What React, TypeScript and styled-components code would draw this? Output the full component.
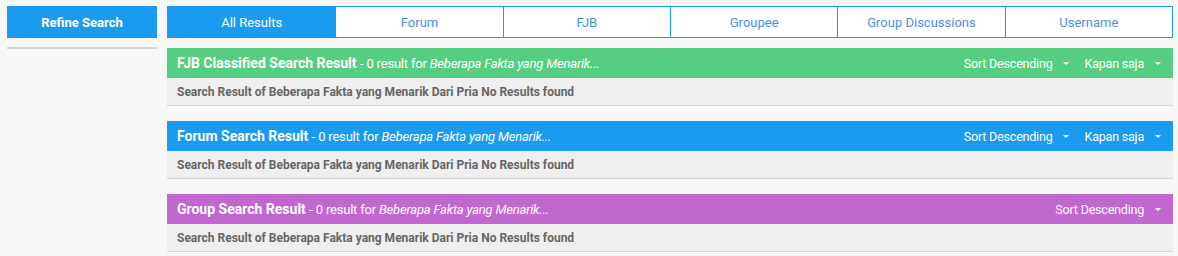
import React from "react";
import styled, { createGlobalStyle } from "styled-components";

const Global = createGlobalStyle`
  html, body { margin: 0; padding: 0; background: #f7f7f7; }
  body { font-family: Roboto, "Noto Sans", Arial, sans-serif; }
  * { box-sizing: border-box; }
`;

const Page = styled.div`
  display: flex;
  align-items: flex-start;
  gap: 10px;
  padding: 6px 5px 0 7px;
  width: 1178px;
  height: 256px;
  overflow: hidden;
`;

const Sidebar = styled.aside`
  width: 150px;
  flex: none;
  display: flex;
  flex-direction: column;
  gap: 9px;
`;

const RefineButton = styled.div`
  flex: none;
  height: 32px;
  background: #1a9bef;
  color: #fff;
  font-weight: 700;
  font-size: 13px;
  display: flex;
  align-items: center;
  justify-content: center;
`;

const Divider = styled.div`
  flex: none;
  height: 2px;
  background: #d6d6d6;
`;

const Main = styled.main`
  width: 1006px;
  flex: none;
  display: flex;
  flex-direction: column;
`;

const Tabs = styled.nav`
  flex: none;
  display: grid;
  grid-template-columns: repeat(6, 1fr);
  height: 32px;
  border: 1px solid #1a9bef;
  background: #fff;
  margin-bottom: 10px;
`;

const Tab = styled.div<{ $active?: boolean }>`
  display: flex;
  align-items: center;
  justify-content: center;
  font-size: 13px;
  color: ${(p) => (p.$active ? "#fff" : "#4a90e2")};
  background: ${(p) => (p.$active ? "#1a9bef" : "#fff")};
  & + & { border-left: 1px solid #1a9bef; }
`;

const Section = styled.section`
  flex: none;
  display: flex;
  flex-direction: column;
  margin-bottom: 15px;
`;

const Header = styled.div<{ $color: string }>`
  flex: none;
  height: 30px;
  background: ${(p) => p.$color};
  color: #fff;
  display: flex;
  align-items: center;
  justify-content: space-between;
  padding: 0 9px 0 10px;
`;

const Title = styled.div`
  font-size: 14px;
  white-space: nowrap;
  b { font-weight: 700; }
`;

const Sub = styled.span`
  font-size: 13px;
  letter-spacing: -0.2px;
  i { font-style: italic; }
`;

const Controls = styled.div`
  display: flex;
  gap: 15px;
  font-size: 12.5px;
  letter-spacing: -0.2px;
  padding-right: 3px;
`;

const Dropdown = styled.div`
  display: flex;
  align-items: center;
  gap: 11px;
  &::after {
    content: "";
    width: 0;
    height: 0;
    border-left: 3.5px solid transparent;
    border-right: 3.5px solid transparent;
    border-top: 3.5px solid #fff;
    margin-top: 1px;
  }
`;

const Body = styled.div`
  flex: none;
  height: 28px;
  background: #efefef;
  border-bottom: 1px solid #d6d6d6;
  color: #666;
  font-size: 12px;
  font-weight: 700;
  display: flex;
  align-items: center;
  padding: 0 10px;
`;

const tabs = ["All Results", "Forum", "FJB", "Groupee", "Group Discussions", "Username"];

const sections = [
  { title: "FJB Classified Search Result", color: "#56ce82", kapan: true },
  { title: "Forum Search Result", color: "#1a9bef", kapan: true },
  { title: "Group Search Result", color: "#c266d0", kapan: false },
];

export default function App() {
  return (
    <>
      <Global />
      <Page>
        <Sidebar>
          <RefineButton>Refine Search</RefineButton>
          <Divider />
        </Sidebar>
        <Main>
          <Tabs>
            {tabs.map((t, i) => (
              <Tab key={t} $active={i === 0}>{t}</Tab>
            ))}
          </Tabs>
          {sections.map((s) => (
            <Section key={s.title}>
              <Header $color={s.color}>
                <Title>
                  <b>{s.title}</b>{" "}
                  <Sub>- 0 result for <i>Beberapa Fakta yang Menarik...</i></Sub>
                </Title>
                <Controls>
                  <Dropdown>Sort Descending</Dropdown>
                  {s.kapan && <Dropdown>Kapan saja</Dropdown>}
                </Controls>
              </Header>
              <Body>Search Result of Beberapa Fakta yang Menarik Dari Pria No Results found</Body>
            </Section>
          ))}
        </Main>
      </Page>
    </>
  );
}
